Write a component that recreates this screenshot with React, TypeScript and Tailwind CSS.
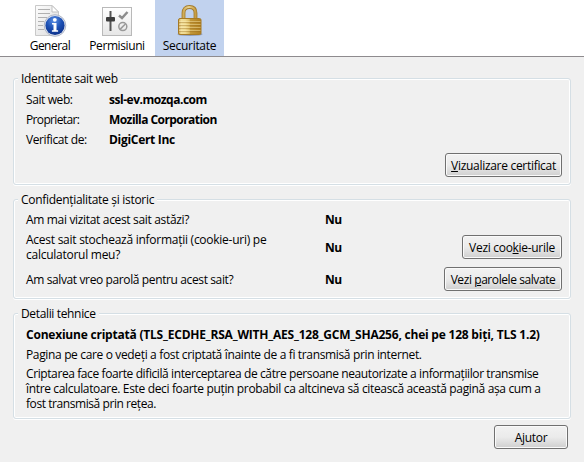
import type { ReactNode } from "react";

function InfoIcon() {
  return (
    <svg width="34" height="34" viewBox="0 0 34 34" className="block">
      <defs>
        <radialGradient id="blue" cx="45%" cy="25%" r="80%">
          <stop offset="0" stopColor="#5b90e6" />
          <stop offset=".5" stopColor="#1c50b4" />
          <stop offset="1" stopColor="#0a2c84" />
        </radialGradient>
        <linearGradient id="sheet" x1="0" y1="0" x2="1" y2="1">
          <stop offset="0" stopColor="#fdfdfd" />
          <stop offset="1" stopColor="#dcdcdc" />
        </linearGradient>
      </defs>
      <path d="M2.500 1.500H19l6.500 6.500V31.500H2.500Z" fill="url(#sheet)" stroke="#c9c9c9" />
      <path d="M19 1.500V8H25.500Z" fill="#fff" stroke="#c0c0c0" />
      <path d="M5 5.500H17M5 9.500H17M5 13.500H14M5 17.500H11M5 21.500H10M5 25.500H11" stroke="#b0b0b0" />
      <circle cx="22" cy="21.500" r="10.800" fill="#dfe4ee" stroke="#a2aabb" strokeWidth=".8" />
      <circle cx="22" cy="21.500" r="9.600" fill="url(#blue)" />
      <circle cx="21.800" cy="15.800" r="1.900" fill="#fff" />
      <path d="M19 19H23.500V26.300H25.100V27.800H18.900V26.300H20.500V20.500H19Z" fill="#fff" />
    </svg>
  );
}

function PermissionsIcon() {
  return (
    <svg width="30" height="30" viewBox="0 0 30 30" className="block">
      <defs>
        <linearGradient id="panel" x1="0" y1="0" x2="0" y2="1">
          <stop offset="0" stopColor="#fff" />
          <stop offset="1" stopColor="#e6e6e6" />
        </linearGradient>
      </defs>
      <rect x=".5" y=".5" width="29" height="28" fill="url(#panel)" stroke="#b9b9b9" />
      <path d="M8.500 4V24" stroke="#555" strokeWidth="2" />
      <rect x="4" y="10" width="9" height="4.500" rx="1" fill="#3d3d3d" />
      <path d="M17 8.500L20 11L25.500 5" fill="none" stroke="#8d8d8d" strokeWidth="2.500" />
      <circle cx="20.800" cy="19.600" r="4" fill="none" stroke="#999" strokeWidth="1.500" />
      <path d="M18 22.400L23.600 16.800" stroke="#999" strokeWidth="1.500" />
    </svg>
  );
}

function LockIcon() {
  return (
    <svg width="27" height="33" viewBox="0 0 27 33" className="block">
      <defs>
        <linearGradient id="brass" x1="0" y1="0" x2="1" y2="0">
          <stop offset="0" stopColor="#cfa650" />
          <stop offset=".12" stopColor="#f0dd9a" />
          <stop offset=".3" stopColor="#efd98e" />
          <stop offset=".48" stopColor="#d9b962" />
          <stop offset=".52" stopColor="#c3983a" />
          <stop offset="1" stopColor="#b07f1e" />
        </linearGradient>
        <linearGradient id="shackle" x1="0" y1="0" x2="1" y2="0">
          <stop offset="0" stopColor="#d0ad58" />
          <stop offset=".4" stopColor="#ecd590" />
          <stop offset="1" stopColor="#c79d43" />
        </linearGradient>
      </defs>
      <ellipse cx="14" cy="30.300" rx="12.500" ry="1.700" fill="#6d7894" opacity=".6" />
      <path d="M7.500 18V9Q7.500 3 13.500 3Q19.500 3 19.500 9V18" fill="none" stroke="#a37b2d" strokeWidth="3.800" />
      <path d="M7.500 18V9Q7.500 3 13.500 3Q19.500 3 19.500 9V18" fill="none" stroke="url(#shackle)" strokeWidth="2" />
      <rect x="2.500" y="14.500" width="22.500" height="16" rx="1.500" fill="url(#brass)" stroke="#a57a26" />
      <path d="M3 18.500H24.500M3 21.500H24.500M3 24.500H24.500M3 27.500H24.500" stroke="#94681c" opacity=".35" />
      <path d="M3 17.500H24.500M3 20.500H24.500M3 23.500H24.500M3 26.500H24.500" stroke="#fff3be" opacity=".4" />
    </svg>
  );
}

function Group({ title, titleClass, className, children }: { title: string; titleClass: string; className: string; children: ReactNode }) {
  return (
    <section className={`mx-[13px] rounded-[3px] border border-[#d5dfe5] shadow-[inset_0_0_0_1px_#fff,0_1px_0_#fff] ${className}`}>
      <h2 className={`-mt-[8px] ml-[4px] h-4 w-fit bg-[#f0f0f0] px-[3px] leading-4 ${titleClass}`}>{title}</h2>
      {children}
    </section>
  );
}

function Button({ className, children }: { className: string; children: ReactNode }) {
  return (
    <button className={`h-6 shrink-0 whitespace-nowrap rounded-[3px] border border-[#707070] bg-linear-to-b from-[#f2f2f2] from-0% via-[#ebebeb] via-50% to-[#cfcfcf] text-center leading-[21px] shadow-[inset_0_0_0_1px_#fafafa] ${className}`}>
      {children}
    </button>
  );
}

export default function App() {
  return (
    <div className="h-[462px] w-[584px] overflow-hidden bg-[#f0f0f0] font-['Open_Sans','Noto_Sans',sans-serif] text-[12px] leading-[15px] tracking-[-0.3px] whitespace-nowrap text-black">
      <nav className="flex h-[57px] border-b border-[#8e8b8e] bg-white pl-[21px]">
        <div className="flex w-[58px] flex-col items-center pt-[4px]">
          <InfoIcon />
          <span className="leading-4 tracking-[-0.5px]">General</span>
        </div>
        <div className="ml-[7px] flex w-[62px] flex-col items-center pt-[7px]">
          <PermissionsIcon />
          <span className="mt-px leading-4 tracking-[-0.4px]">Permisiuni</span>
        </div>
        <div className="ml-[7px] flex w-[69px] flex-col items-center bg-[#c1d2ee] pt-[4px]">
          <LockIcon />
          <span className="mt-px leading-4">Securitate</span>
        </div>
      </nav>

      <Group title="Identitate sait web" titleClass="tracking-[-0.35px]" className="mt-[21px] h-[107px]">
        <dl className="ml-3 mt-[3px] grid grid-cols-[83px_auto] leading-5">
          <dt className="tracking-[-0.4px]">Sait web:</dt>
          <dd className="font-bold tracking-[-0.48px]">ssl-ev.mozqa.com</dd>
          <dt className="tracking-[-0.65px]">Proprietar:</dt>
          <dd className="font-bold tracking-[-0.56px]">Mozilla Corporation</dd>
          <dt className="tracking-[-0.4px]">Verificat de:</dt>
          <dd className="font-bold">DigiCert Inc</dd>
        </dl>
        <div className="mr-[8px] mt-[3px] flex justify-end">
          <Button className="w-[117px]"><u>V</u>izualizare certificat</Button>
        </div>
      </Group>

      <Group title="Confidențialitate și istoric" titleClass="" className="mt-[14px] h-[100px]">
        <div className="ml-3 mt-px flex h-5 items-center">
          <p className="w-[299px] tracking-[-0.33px]">Am mai vizitat acest sait astăzi?</p>
          <b className="tracking-[-0.6px]">Nu</b>
        </div>
        <div className="ml-3 mr-[8px] mt-px flex h-[34px] items-center">
          <p className="w-[299px] tracking-[-0.26px]">Acest sait stochează informații (cookie-uri) pe<br />calculatorul meu?</p>
          <b className="grow tracking-[-0.6px]">Nu</b>
          <Button className="w-[100px]">Vezi coo<u>k</u>ie-urile</Button>
        </div>
        <div className="ml-3 mr-[8px] mt-[3px] flex h-[24px] items-center">
          <p className="w-[299px] tracking-[-0.38px]">Am salvat vreo parolă pentru acest sait?</p>
          <b className="grow tracking-[-0.6px]">Nu</b>
          <Button className="w-[118px] tracking-[-0.42px]">Vezi <u>p</u>arolele salvate</Button>
        </div>
      </Group>

      <Group title="Detalii tehnice" titleClass="tracking-[-0.35px]" className="mt-[14px] h-[106px]">
        <div className="ml-3 mt-[3px]">
          <p className="font-bold leading-5 tracking-[-0.215px]">Conexiune criptată (TLS_ECDHE_RSA_WITH_AES_128_GCM_SHA256, chei pe 128 biți, TLS 1.2)</p>
          <p className="leading-5 tracking-[-0.35px]">Pagina pe care o vedeți a fost criptată înainte de a fi transmisă prin internet.</p>
          <p className="mt-px tracking-[-0.4px]">Criptarea face foarte dificilă interceptarea de către persoane neautorizate a informațiilor transmise</p>
          <p className="tracking-[-0.345px]">între calculatoare. Este deci foarte puțin probabil ca altcineva să citească această pagină așa cum a</p>
          <p className="tracking-[-0.43px]">fost transmisă prin rețea.</p>
        </div>
      </Group>

      <footer className="mr-4 mt-[6px] flex justify-end">
        <Button className="w-[74px]">Ajutor</Button>
      </footer>
    </div>
  );
}
